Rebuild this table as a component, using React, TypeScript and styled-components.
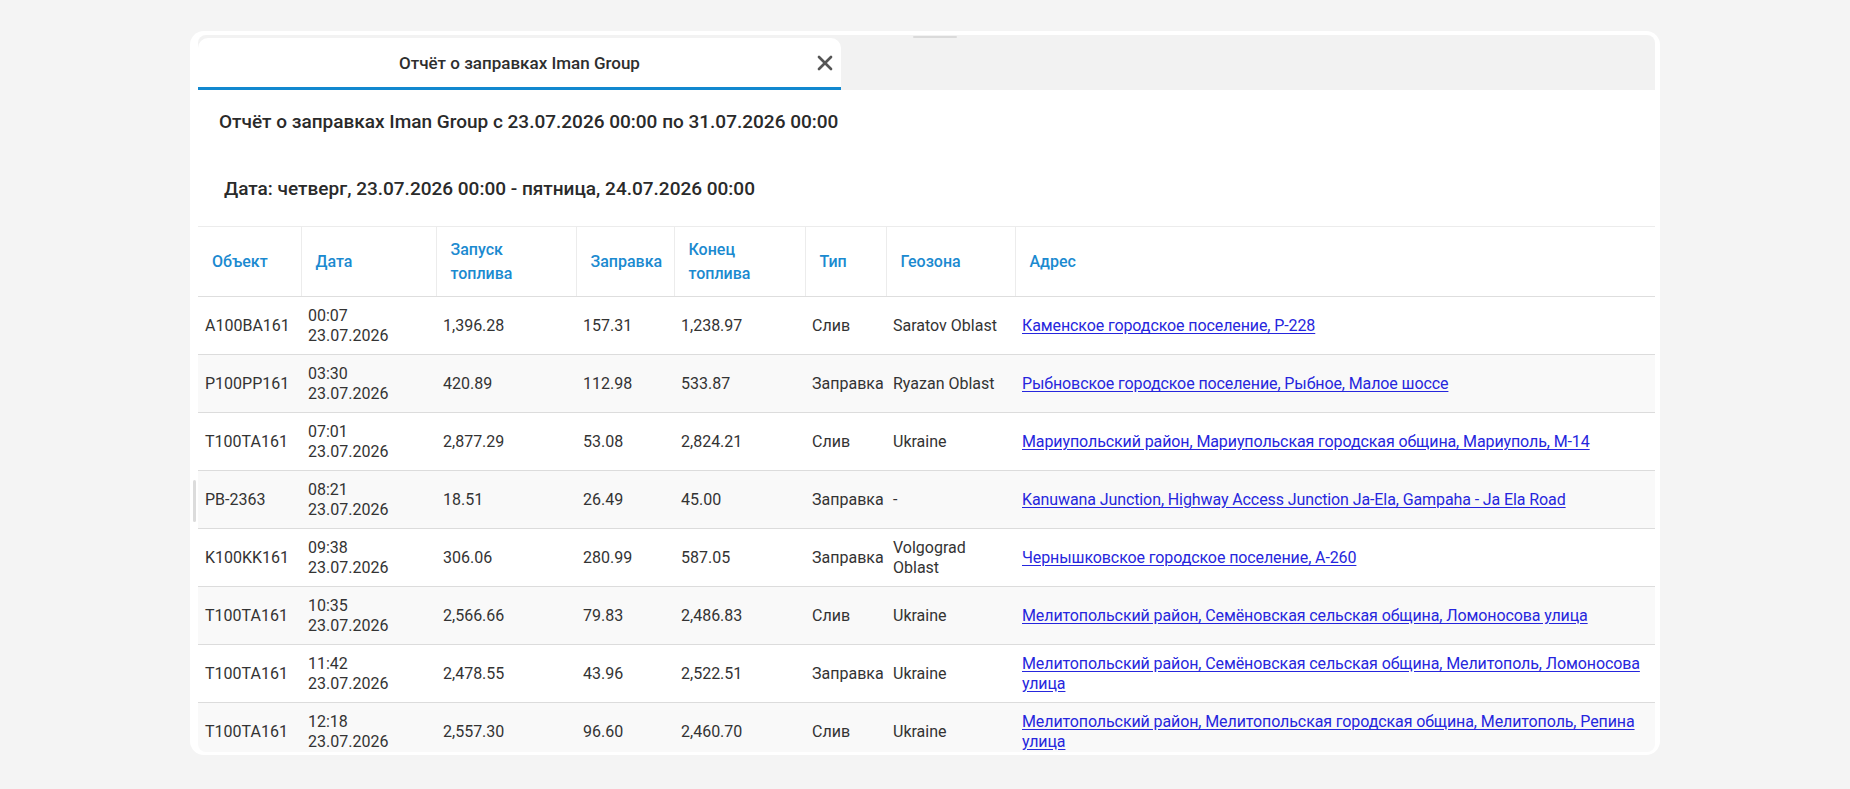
import React from "react";
import styled, { createGlobalStyle } from "styled-components";
import { X } from "lucide-react";

const GlobalStyle = createGlobalStyle`
  html, body {
    margin: 0;
    padding: 0;
    background: #f4f4f4;
    font-family: Roboto, "Liberation Sans", sans-serif;
  }
  * { box-sizing: border-box; }
`;

const Page = styled.div`
  height: 789px;
  padding: 31px 190px 0;
  overflow: hidden;
`;

const Card = styled.div`
  position: relative;
  height: 724px;
  background: #ffffff;
  border-radius: 14px;
  padding: 4px 5px 3px 8px;
  display: flex;
`;

const ScrollThumb = styled.div`
  position: absolute;
  left: 3px;
  top: 449px;
  width: 3px;
  height: 42px;
  border-radius: 2px;
  background: #dcdcdc;
`;

const Panel = styled.div`
  flex: 1;
  min-width: 0;
  background: #ffffff;
  border-radius: 8px;
  overflow: hidden;
  display: flex;
  flex-direction: column;
`;

const TabBar = styled.div`
  position: relative;
  flex: none;
  height: 55px;
  padding-top: 3px;
  background: #f2f2f2;
  display: flex;
  align-items: flex-end;
`;

const TabHint = styled.div`
  position: absolute;
  left: 715px;
  top: 1px;
  width: 44px;
  height: 2px;
  border-radius: 1px;
  background: #dadada;
`;

const Tab = styled.div`
  width: 643px;
  height: 52px;
  background: #ffffff;
  border-radius: 10px 10px 0 0;
  border-bottom: 3px solid #1288cf;
  display: grid;
  grid-template-columns: 26px 1fr 26px;
  align-items: center;
  padding: 0 3px;
`;

const TabTitle = styled.div`
  grid-column: 2;
  text-align: center;
  font-size: 17px;
  font-weight: 500;
  color: #2e2e2e;
  padding-top: 1px;
`;

const CloseButton = styled.button`
  grid-column: 3;
  border: 0;
  background: transparent;
  padding: 0;
  width: 26px;
  height: 26px;
  display: flex;
  align-items: center;
  justify-content: center;
  color: #555555;
  cursor: pointer;
  svg { flex: none; }
`;

const Content = styled.div`
  flex: 1;
  min-height: 0;
  overflow: hidden;
`;

const ReportTitle = styled.h1<{ $indent: number }>`
  margin: 20px 0 0;
  padding-left: ${(p) => p.$indent}px;
  font-size: 19px;
  line-height: 24px;
  font-weight: 500;
  color: #2a2a2a;
`;

const DateTitle = styled.h2<{ $indent: number }>`
  margin: 43px 0 25px;
  padding-left: ${(p) => p.$indent}px;
  font-size: 19px;
  line-height: 24px;
  font-weight: 500;
  color: #2a2a2a;
`;

const Table = styled.table`
  width: 100%;
  table-layout: fixed;
  border-collapse: collapse;
  font-size: 16px;
  color: #333333;
`;

const HeadCell = styled.th`
  height: 70px;
  padding: 0 14px;
  text-align: left;
  vertical-align: middle;
  font-size: 16px;
  line-height: 24px;
  font-weight: 500;
  color: #1b8ad0;
  border-top: 1px solid #ececec;
  border-bottom: 1px solid #dedede;
  border-right: 1px solid #ececec;
  &:last-child { border-right: 0; }
`;

const Row = styled.tr<{ $striped: boolean }>`
  background: ${(p) => (p.$striped ? "#f9f9f9" : "#ffffff")};
  border-bottom: 1px solid #dcdcdc;
`;

const Cell = styled.td`
  padding: 9px 7px 8px;
  font-size: 16px;
  line-height: 20px;
  vertical-align: middle;
  font-weight: 400;
  color: #333333;
`;

const AddressLink = styled.a`
  color: #2626dd;
  text-decoration: underline;
  text-underline-offset: 2px;
  letter-spacing: -0.1px;
`;

type Rec = {
  obj: string;
  time: string;
  start: string;
  fill: string;
  end: string;
  type: string;
  zone: string;
  addr: string;
};

const rows: Rec[] = [
  { obj: "A100BA161", time: "00:07", start: "1,396.28", fill: "157.31", end: "1,238.97", type: "Слив", zone: "Saratov Oblast", addr: "Каменское городское поселение, Р-228" },
  { obj: "P100PP161", time: "03:30", start: "420.89", fill: "112.98", end: "533.87", type: "Заправка", zone: "Ryazan Oblast", addr: "Рыбновское городское поселение, Рыбное, Малое шоссе" },
  { obj: "T100TA161", time: "07:01", start: "2,877.29", fill: "53.08", end: "2,824.21", type: "Слив", zone: "Ukraine", addr: "Мариупольский район, Мариупольская городская община, Мариуполь, М-14" },
  { obj: "PB-2363", time: "08:21", start: "18.51", fill: "26.49", end: "45.00", type: "Заправка", zone: "-", addr: "Kanuwana Junction, Highway Access Junction Ja-Ela, Gampaha - Ja Ela Road" },
  { obj: "K100KK161", time: "09:38", start: "306.06", fill: "280.99", end: "587.05", type: "Заправка", zone: "Volgograd Oblast", addr: "Чернышковское городское поселение, А-260" },
  { obj: "T100TA161", time: "10:35", start: "2,566.66", fill: "79.83", end: "2,486.83", type: "Слив", zone: "Ukraine", addr: "Мелитопольский район, Семёновская сельская община, Ломоносова улица" },
  { obj: "T100TA161", time: "11:42", start: "2,478.55", fill: "43.96", end: "2,522.51", type: "Заправка", zone: "Ukraine", addr: "Мелитопольский район, Семёновская сельская община, Мелитополь, Ломоносова улица" },
  { obj: "T100TA161", time: "12:18", start: "2,557.30", fill: "96.60", end: "2,460.70", type: "Слив", zone: "Ukraine", addr: "Мелитопольский район, Мелитопольская городская община, Мелитополь, Репина улица" },
];

const colWidths = [103, 135, 140, 98, 131, 81, 129, 640];

export default function App() {
  return (
    <>
      <GlobalStyle />
      <Page>
        <Card>
          <ScrollThumb />
          <Panel>
            <TabBar>
              <TabHint />
              <Tab>
                <TabTitle>Отчёт о заправках Iman Group</TabTitle>
                <CloseButton aria-label="Закрыть">
                  <X size={24} strokeWidth={2.7} />
                </CloseButton>
              </Tab>
            </TabBar>
            <Content>
              <ReportTitle $indent={21}>
                Отчёт о заправках Iman Group c 23.07.2026 00:00 по 31.07.2026 00:00
              </ReportTitle>
              <DateTitle $indent={26}>
                Дата: четверг, 23.07.2026 00:00 - пятница, 24.07.2026 00:00
              </DateTitle>
              <Table>
                <colgroup>
                  {colWidths.map((w, i) => (
                    <col key={i} style={{ width: w }} />
                  ))}
                </colgroup>
                <thead>
                  <tr>
                    <HeadCell>Объект</HeadCell>
                    <HeadCell>Дата</HeadCell>
                    <HeadCell>
                      Запуск
                      <br />
                      топлива
                    </HeadCell>
                    <HeadCell>Заправка</HeadCell>
                    <HeadCell>
                      Конец
                      <br />
                      топлива
                    </HeadCell>
                    <HeadCell>Тип</HeadCell>
                    <HeadCell>Геозона</HeadCell>
                    <HeadCell>Адрес</HeadCell>
                  </tr>
                </thead>
                <tbody>
                  {rows.map((r, i) => (
                    <Row key={i} $striped={i % 2 === 1}>
                      <Cell>{r.obj}</Cell>
                      <Cell>
                        {r.time}
                        <br />
                        23.07.2026
                      </Cell>
                      <Cell>{r.start}</Cell>
                      <Cell>{r.fill}</Cell>
                      <Cell>{r.end}</Cell>
                      <Cell>{r.type}</Cell>
                      <Cell>{r.zone}</Cell>
                      <Cell>
                        <AddressLink href="#">{r.addr}</AddressLink>
                      </Cell>
                    </Row>
                  ))}
                </tbody>
              </Table>
            </Content>
          </Panel>
        </Card>
      </Page>
    </>
  );
}
